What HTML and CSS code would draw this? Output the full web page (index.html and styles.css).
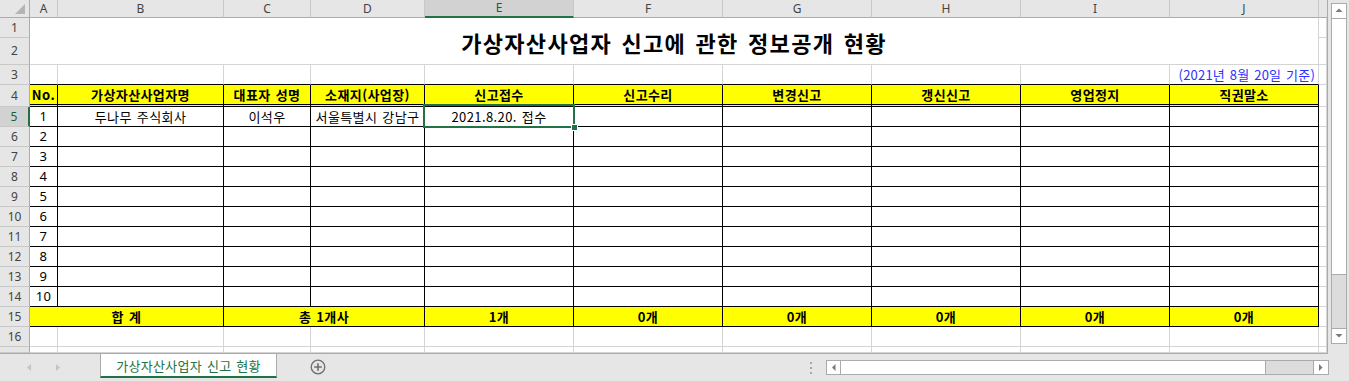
FILE: index.html
```html
<!DOCTYPE html>
<html lang="ko">
<head>
<meta charset="utf-8">
<title>가상자산사업자 신고 현황</title>
<link rel="stylesheet" href="styles.css">
</head>
<body>
<div class="app">
  <div class="main">
    <div class="sheet">
      <!-- column header row -->
      <div class="corner"><svg width="30" height="18" viewBox="0 0 30 18"><polygon points="25,4 25,14 15,14" fill="#b4b4b4"/></svg></div>
      <div class="ch">A</div><div class="ch">B</div><div class="ch">C</div><div class="ch">D</div>
      <div class="ch sel">E</div><div class="ch">F</div><div class="ch">G</div><div class="ch">H</div>
      <div class="ch">I</div><div class="ch">J</div><div class="ch last"></div>

      <!-- row 1 -->
      <div class="rh">1</div>
      <div class="c title">가상자산사업자 신고에 관한 정보공개 현황</div>
      <div class="c"></div>
      <!-- row 2 -->
      <div class="rh">2</div>
      <div class="c"></div>
      <!-- row 3 -->
      <div class="rh">3</div>
      <div class="c above"></div><div class="c above"></div><div class="c above"></div><div class="c above"></div><div class="c above"></div>
      <div class="c above"></div><div class="c above"></div><div class="c above"></div><div class="c above"></div>
      <div class="c above date">(2021년 8월 20일 기준)</div>
      <div class="c"></div>
      <!-- row 4 -->
      <div class="rh">4</div>
      <div class="c t y h4">No.</div>
      <div class="c t y h4">가상자산사업자명</div>
      <div class="c t y h4">대표자 성명</div>
      <div class="c t y h4">소재지(사업장)</div>
      <div class="c t y h4">신고접수</div>
      <div class="c t y h4">신고수리</div>
      <div class="c t y h4">변경신고</div>
      <div class="c t y h4">갱신신고</div>
      <div class="c t y h4">영업정지</div>
      <div class="c t y h4">직권말소</div>
      <div class="c"></div>
      <!-- row 5 -->
      <div class="rh sel">5</div>
      <div class="c t num">1</div>
      <div class="c t">두나무 주식회사</div>
      <div class="c t">이석우</div>
      <div class="c t">서울특별시 강남구</div>
      <div class="c t cur">2021.8.20. 접수<span class="selbox"><span class="handle"></span></span></div>
      <div class="c t"></div><div class="c t"></div><div class="c t"></div><div class="c t"></div><div class="c t"></div>
      <div class="c"></div>
      <!-- row 6 -->
      <div class="rh">6</div>
      <div class="c t num">2</div>
      <div class="c t"></div><div class="c t"></div><div class="c t"></div><div class="c t"></div><div class="c t"></div><div class="c t"></div><div class="c t"></div><div class="c t"></div><div class="c t"></div>
      <div class="c"></div>
      <!-- row 7 -->
      <div class="rh">7</div>
      <div class="c t num">3</div>
      <div class="c t"></div><div class="c t"></div><div class="c t"></div><div class="c t"></div><div class="c t"></div><div class="c t"></div><div class="c t"></div><div class="c t"></div><div class="c t"></div>
      <div class="c"></div>
      <!-- row 8 -->
      <div class="rh">8</div>
      <div class="c t num">4</div>
      <div class="c t"></div><div class="c t"></div><div class="c t"></div><div class="c t"></div><div class="c t"></div><div class="c t"></div><div class="c t"></div><div class="c t"></div><div class="c t"></div>
      <div class="c"></div>
      <!-- row 9 -->
      <div class="rh">9</div>
      <div class="c t num">5</div>
      <div class="c t"></div><div class="c t"></div><div class="c t"></div><div class="c t"></div><div class="c t"></div><div class="c t"></div><div class="c t"></div><div class="c t"></div><div class="c t"></div>
      <div class="c"></div>
      <!-- row 10 -->
      <div class="rh">10</div>
      <div class="c t num">6</div>
      <div class="c t"></div><div class="c t"></div><div class="c t"></div><div class="c t"></div><div class="c t"></div><div class="c t"></div><div class="c t"></div><div class="c t"></div><div class="c t"></div>
      <div class="c"></div>
      <!-- row 11 -->
      <div class="rh">11</div>
      <div class="c t num">7</div>
      <div class="c t"></div><div class="c t"></div><div class="c t"></div><div class="c t"></div><div class="c t"></div><div class="c t"></div><div class="c t"></div><div class="c t"></div><div class="c t"></div>
      <div class="c"></div>
      <!-- row 12 -->
      <div class="rh">12</div>
      <div class="c t num">8</div>
      <div class="c t"></div><div class="c t"></div><div class="c t"></div><div class="c t"></div><div class="c t"></div><div class="c t"></div><div class="c t"></div><div class="c t"></div><div class="c t"></div>
      <div class="c"></div>
      <!-- row 13 -->
      <div class="rh">13</div>
      <div class="c t num">9</div>
      <div class="c t"></div><div class="c t"></div><div class="c t"></div><div class="c t"></div><div class="c t"></div><div class="c t"></div><div class="c t"></div><div class="c t"></div><div class="c t"></div>
      <div class="c"></div>
      <!-- row 14 -->
      <div class="rh">14</div>
      <div class="c t num">10</div>
      <div class="c t"></div><div class="c t"></div><div class="c t"></div><div class="c t"></div><div class="c t"></div><div class="c t"></div><div class="c t"></div><div class="c t"></div><div class="c t"></div>
      <div class="c"></div>
      <!-- row 15 -->
      <div class="rh">15</div>
      <div class="c t y span2">합 계</div>
      <div class="c t y span2">총 1개사</div>
      <div class="c t y">1개</div>
      <div class="c t y">0개</div>
      <div class="c t y">0개</div>
      <div class="c t y">0개</div>
      <div class="c t y">0개</div>
      <div class="c t y">0개</div>
      <div class="c"></div>
      <!-- row 16 -->
      <div class="rh">16</div>
      <div class="c"></div><div class="c"></div><div class="c"></div><div class="c"></div><div class="c"></div><div class="c"></div>
      <div class="c"></div><div class="c"></div><div class="c"></div><div class="c"></div><div class="c"></div>
      <!-- row 17 (partial) -->
      <div class="rh"></div>
      <div class="c"></div><div class="c"></div><div class="c"></div><div class="c"></div><div class="c"></div><div class="c"></div>
      <div class="c"></div><div class="c"></div><div class="c"></div><div class="c"></div><div class="c"></div>
    </div>

    <div class="vwrap">
      <div class="vscroll">
        <div class="vbtn up"><svg width="14" height="13" viewBox="0 0 14 13"><polygon points="3.5,8 10.5,8 7,4.5" fill="#7a7a7a"/></svg></div>
        <div class="vthumb"></div>
        <div class="vtrack"></div>
        <div class="vbtn down"><svg width="14" height="13" viewBox="0 0 14 13"><polygon points="3.5,5 10.5,5 7,8.5" fill="#7a7a7a"/></svg></div>
      </div>
    </div>
  </div>

  <div class="tabbar">
    <div class="nav"><svg width="100" height="27" viewBox="0 0 100 27"><polygon points="27,13.5 31,10 31,17" fill="#c4c4c4"/><polygon points="60,13.5 56,10 56,17" fill="#c4c4c4"/></svg></div>
    <div class="tab">가상자산사업자 신고 현황</div>
    <div class="plus"><svg width="16" height="16" viewBox="0 0 16 16"><circle cx="8" cy="8" r="6.8" fill="none" stroke="#6e6e6e" stroke-width="1.3"/><path d="M8 4.2V11.8M4.2 8H11.8" stroke="#6e6e6e" stroke-width="1.6"/></svg></div>
    <div class="right">
      <div class="dots"><span></span><span></span><span></span></div>
      <div class="hscroll">
        <div class="hbtn lft"><svg width="13" height="13" viewBox="0 0 13 13"><polygon points="5,6.5 8.5,3 8.5,10" fill="#7a7a7a"/></svg></div>
        <div class="hthumb"></div>
        <div class="htrack"></div>
        <div class="hbtn rgt"><svg width="13" height="13" viewBox="0 0 13 13"><polygon points="8.5,6.5 5,3 5,10" fill="#7a7a7a"/></svg></div>
      </div>
    </div>
  </div>
</div>
</body>
</html>
```

FILE: styles.css
```css
* { box-sizing: border-box; }

body {
  margin: 0;
  background: #e6e6e6;
  font-family: "Noto Sans CJK KR", "Noto Sans", sans-serif;
}

.app {
  width: 1349px;
  height: 381px;
  display: flex;
  flex-direction: column;
  overflow: hidden;
}

.main {
  display: flex;
  height: 354px;
}

.sheet {
  width: 1328px;
  height: 354px;
  display: grid;
  grid-template-columns: 30px 28px 166px 87px 114px repeat(6, 149px) 8px;
  grid-template-rows: 18px 20px 27px 20px 22px repeat(12, 20px) 6px;
  background: #fff;
  border-right: 1px solid #ababab;
  border-bottom: 1px solid #ababab;
}

/* corner & headers */
.corner {
  background: #e6e6e6;
  border-right: 1px solid #ababab;
  border-bottom: 1px solid #ababab;
}
.corner svg { display: block; }

.ch {
  background: #e6e6e6;
  border-right: 1px solid #c8c8c8;
  border-bottom: 1px solid #ababab;
  display: flex;
  align-items: center;
  justify-content: center;
  font-family: "Noto Sans", "DejaVu Sans", sans-serif;
  font-size: 12px;
  color: #444;
  line-height: 1;
}
.ch.last { border-right: none; }
.ch.sel {
  background: #d2d2d2;
  border-bottom: 2px solid #217346;
  color: #1b5e38;
}

.rh {
  background: #e6e6e6;
  border-right: 1px solid #ababab;
  border-bottom: 1px solid #c8c8c8;
  display: flex;
  align-items: center;
  justify-content: center;
  font-family: "Noto Sans", "DejaVu Sans", sans-serif;
  font-size: 12px;
  color: #444;
  line-height: 1;
}
.rh.sel {
  background: #d2d2d2;
  border-right: 2px solid #217346;
  color: #1b5e38;
}

/* cells */
.c {
  border-right: 1px solid #d4d4d4;
  border-bottom: 1px solid #d4d4d4;
  display: flex;
  align-items: center;
  justify-content: center;
  font-size: 13px;
  letter-spacing: 0.4px;
  word-spacing: 1px;
  line-height: 1;
  white-space: nowrap;
  overflow: hidden;
  color: #000;
}

.title {
  grid-column: span 10;
  grid-row: span 2;
  font-size: 22px;
  font-weight: 700;
  letter-spacing: 1.3px;
  word-spacing: 2px;
  padding-top: 1px;
}

.above { border-bottom-color: #000; }

.date {
  justify-content: flex-end;
  padding-right: 3px;
  color: #3030ff;
  letter-spacing: 0.2px;
}

.t {
  border-right-color: #000;
  border-bottom-color: #000;
}

.y {
  background: #ffff00;
  font-weight: 700;
}

.h4 { border-bottom: 3px double #000; }

.span2 { grid-column: span 2; }

.num { font-family: "Noto Sans", sans-serif; }

.cur {
  position: relative;
  overflow: visible;
}
.selbox {
  position: absolute;
  left: -2px;
  top: -3px;
  right: -2px;
  bottom: -2px;
  border: 2px solid #217346;
}
.handle {
  position: absolute;
  right: -5px;
  bottom: -5px;
  width: 7px;
  height: 7px;
  background: #217346;
  border: 1px solid #fff;
}

/* vertical scrollbar */
.vwrap {
  padding: 3px 0 0 3px;
  width: 21px;
}
.vscroll {
  width: 16px;
  height: 341px;
  border: 1px solid #ababab;
  background: #dcdcdc;
  display: flex;
  flex-direction: column;
}
.vbtn {
  height: 14px;
  background: #fff;
  flex: none;
}
.vbtn svg { display: block; }
.vbtn.up { border-bottom: 1px solid #ababab; height: 15px; }
.vbtn.down { border-top: 1px solid #ababab; height: 15px; }
.vthumb {
  height: 256px;
  background: #fff;
  border-bottom: 1px solid #ababab;
  flex: none;
}
.vtrack { flex: 1; }

/* bottom tab bar */
.tabbar {
  display: flex;
  height: 27px;
  align-items: flex-start;
}
.nav svg { display: block; }

.tab {
  width: 177px;
  height: 24px;
  background: #fff;
  border-left: 1px solid #ababab;
  border-right: 1px solid #ababab;
  border-bottom: 2px solid #217346;
  color: #217346;
  font-size: 13px;
  letter-spacing: 0.3px;
  word-spacing: 1px;
  display: flex;
  align-items: center;
  justify-content: center;
  line-height: 1;
}

.plus {
  margin: 5px 0 0 33px;
}
.plus svg { display: block; }

.right {
  margin-left: auto;
  margin-right: 20px;
  display: flex;
  align-items: flex-start;
}

.dots {
  display: flex;
  flex-direction: column;
  gap: 3px;
  margin: 8px 14px 0 0;
}
.dots span {
  width: 2px;
  height: 2px;
  background: #a6a6a6;
}

.hscroll {
  margin-top: 6px;
  width: 503px;
  height: 15px;
  border: 1px solid #ababab;
  background: #dcdcdc;
  display: flex;
}
.hbtn {
  width: 14px;
  background: #fff;
  flex: none;
}
.hbtn svg { display: block; }
.hbtn.lft { border-right: 1px solid #ababab; }
.hbtn.rgt { border-left: 1px solid #ababab; width: 15px; }
.hthumb {
  width: 425px;
  background: #fff;
  border-right: 1px solid #ababab;
  flex: none;
}
.htrack { flex: 1; }
```
